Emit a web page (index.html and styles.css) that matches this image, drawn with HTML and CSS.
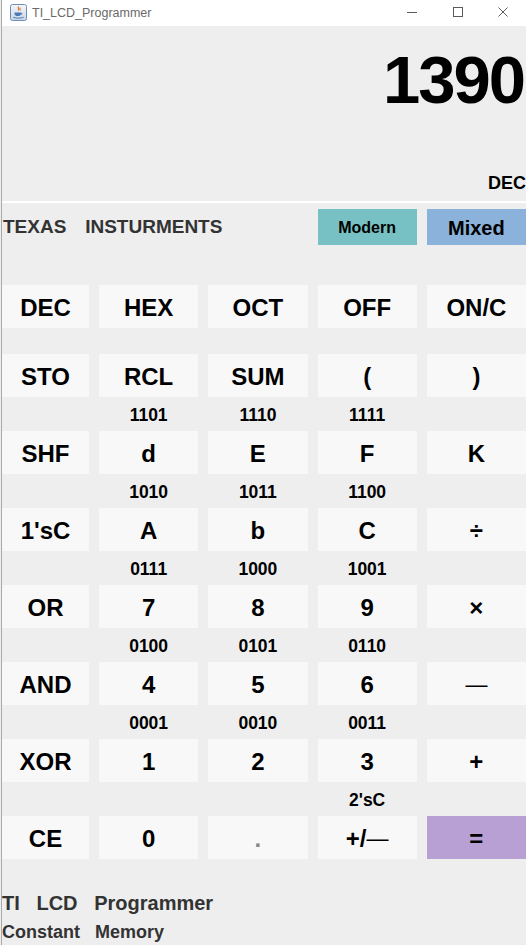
FILE: index.html
```
<!DOCTYPE html>
<html lang="en">
<head>
<meta charset="utf-8">
<title>TI_LCD_Programmer</title>
<link rel="stylesheet" href="styles.css">
</head>
<body>
<div class="window">
  <div class="titlebar">
    <svg class="app-icon" width="17" height="17" viewBox="0 0 17 17">
      <defs>
        <linearGradient id="ig" x1="0" y1="0" x2="0" y2="1">
          <stop offset="0" stop-color="#f4f7fb"/>
          <stop offset="1" stop-color="#c9d6e6"/>
        </linearGradient>
      </defs>
      <rect x="0.5" y="0.5" width="16" height="16" rx="2" fill="url(#ig)" stroke="#6f8db5"/>
      <path d="M8.6 2.5c-1.6 1.4 1.2 2.2-0.4 4.2M10.2 3.6c-1 0.9 0.6 1.5-0.3 2.8" fill="none" stroke="#e2731d" stroke-width="1.1"/>
      <path d="M4.5 8.5h6.5v1.2c0 1.4-1.3 2.3-3.2 2.3s-3.3-0.9-3.3-2.3z" fill="#4f79b4"/>
      <path d="M11 9c1.4 0 1.4 1.6 0 1.6" fill="none" stroke="#4f79b4" stroke-width="0.9"/>
      <path d="M3.2 13.3c2.6 1.1 7.8 1.1 10.4 0" fill="none" stroke="#4f79b4" stroke-width="1"/>
    </svg>
    <span class="title">TI_LCD_Programmer</span>
    <div class="controls">
      <svg class="ctl" width="12" height="12" viewBox="0 0 12 12"><path d="M1 6.5h10" stroke="#5b5b5b" stroke-width="1"/></svg>
      <svg class="ctl" width="12" height="12" viewBox="0 0 12 12"><rect x="1.5" y="1.5" width="9" height="9" fill="none" stroke="#5b5b5b" stroke-width="1"/></svg>
      <svg class="ctl" width="12" height="12" viewBox="0 0 12 12"><path d="M1.5 1.5l9 9M10.5 1.5l-9 9" stroke="#5b5b5b" stroke-width="1"/></svg>
    </div>
  </div>

  <div class="content">
    <div class="display">
      <div class="readout">1390</div>
      <div class="mode">DEC</div>
    </div>
    <div class="separator"></div>

    <div class="grid5 brand-row">
      <div class="brand">TEXAS   INSTURMENTS</div>
      <div class="key chip-modern">Modern</div>
      <div class="key chip-mixed">Mixed</div>
    </div>

    <div class="keypad">
      <div class="grid5 keys">
        <div class="key">DEC</div><div class="key">HEX</div><div class="key">OCT</div><div class="key">OFF</div><div class="key">ON/C</div>
      </div>
      <div class="spacer"></div>
      <div class="grid5 keys">
        <div class="key">STO</div><div class="key">RCL</div><div class="key">SUM</div><div class="key">(</div><div class="key">)</div>
      </div>
      <div class="grid5 labels">
        <div class="lbl"></div><div class="lbl">1101</div><div class="lbl">1110</div><div class="lbl">1111</div><div class="lbl"></div>
      </div>
      <div class="grid5 keys">
        <div class="key">SHF</div><div class="key">d</div><div class="key">E</div><div class="key">F</div><div class="key">K</div>
      </div>
      <div class="grid5 labels">
        <div class="lbl"></div><div class="lbl">1010</div><div class="lbl">1011</div><div class="lbl">1100</div><div class="lbl"></div>
      </div>
      <div class="grid5 keys">
        <div class="key">1'sC</div><div class="key">A</div><div class="key">b</div><div class="key">C</div><div class="key">÷</div>
      </div>
      <div class="grid5 labels">
        <div class="lbl"></div><div class="lbl">0111</div><div class="lbl">1000</div><div class="lbl">1001</div><div class="lbl"></div>
      </div>
      <div class="grid5 keys">
        <div class="key">OR</div><div class="key">7</div><div class="key">8</div><div class="key">9</div><div class="key">×</div>
      </div>
      <div class="grid5 labels">
        <div class="lbl"></div><div class="lbl">0100</div><div class="lbl">0101</div><div class="lbl">0110</div><div class="lbl"></div>
      </div>
      <div class="grid5 keys">
        <div class="key">AND</div><div class="key">4</div><div class="key">5</div><div class="key">6</div><div class="key"><span class="dash">—</span></div>
      </div>
      <div class="grid5 labels">
        <div class="lbl"></div><div class="lbl">0001</div><div class="lbl">0010</div><div class="lbl">0011</div><div class="lbl"></div>
      </div>
      <div class="grid5 keys">
        <div class="key">XOR</div><div class="key">1</div><div class="key">2</div><div class="key">3</div><div class="key">+</div>
      </div>
      <div class="grid5 labels">
        <div class="lbl"></div><div class="lbl"></div><div class="lbl"></div><div class="lbl">2'sC</div><div class="lbl"></div>
      </div>
      <div class="grid5 keys">
        <div class="key">CE</div><div class="key">0</div><div class="key key-dot">.</div><div class="key">+/<span class="dash">—</span></div><div class="key key-equals">=</div>
      </div>
    </div>

    <div class="footer">
      <div class="foot-title">TI   LCD   Programmer</div>
      <div class="foot-sub">Constant   Memory</div>
    </div>
  </div>
</div>
</body>
</html>
```
FILE: styles.css
```
html, body {
  margin: 0;
  padding: 0;
}

body {
  width: 526px;
  height: 945px;
  overflow: hidden;
  background: #eeeeee;
  font-family: "Liberation Sans", Arial, sans-serif;
}

.window {
  margin-left: 1px;
  border-left: 1px solid #a9a9a9;
  height: 945px;
  background: #eeeeee;
}

.titlebar {
  height: 26px;
  background: #ffffff;
  display: flex;
  align-items: center;
}

.app-icon {
  margin-left: 8px;
  margin-top: -2px;
  flex: none;
}

.title {
  margin-left: 5px;
  font-size: 12.5px;
  color: #6a6a6a;
  margin-top: -1px;
}

.controls {
  margin-left: auto;
  display: flex;
  align-items: center;
  gap: 33.5px;
  padding-right: 17px;
  margin-top: -3px;
}

.ctl {
  display: block;
}

.content {
  background: #eeeeee;
}

.display {
  height: 175px;
  box-sizing: border-box;
  padding-top: 20px;
  padding-right: 2px;
  text-align: right;
  color: #000;
  font-weight: bold;
}

.readout {
  font-size: 67px;
  line-height: 67px;
  letter-spacing: -2px;
}

.mode {
  margin-top: 61px;
  margin-right: -2px;
  font-size: 18px;
  line-height: 18px;
}

.separator {
  height: 2px;
  background: #ffffff;
}

.grid5 {
  display: grid;
  grid-template-columns: 87px repeat(4, 1fr);
  column-gap: 10px;
}

.brand-row {
  margin-top: 6px;
  height: 36px;
}

.brand {
  grid-column: 1 / 4;
  white-space: pre;
  word-spacing: 1px;
  font-size: 19px;
  font-weight: bold;
  color: #333333;
  display: flex;
  align-items: center;
  padding-left: 1px;
}

.key {
  background: #f8f8f8;
  display: flex;
  align-items: center;
  justify-content: center;
  box-sizing: border-box;
  padding-top: 2px;
  font-size: 24px;
  font-weight: bold;
  color: #000;
  white-space: nowrap;
}

.chip-modern {
  background: #77c0c4;
  font-size: 16px;
}

.chip-mixed {
  background: #8ab2da;
  font-size: 20px;
}

.keypad {
  margin-top: 40px;
}

.keys {
  height: 43px;
}

.spacer {
  height: 26px;
}

.labels {
  height: 34px;
}

.lbl {
  display: flex;
  align-items: center;
  justify-content: center;
  padding-top: 2px;
  font-size: 17.5px;
  font-weight: bold;
  color: #000;
}

.dash {
  font-weight: normal;
  font-size: 22px;
}

.key-dot {
  color: #8a8a8a;
}

.key-equals {
  background: #b8a0d5;
}

.footer {
  margin-top: 30px;
  font-weight: bold;
  color: #333333;
}

.foot-title {
  white-space: pre;
  font-size: 20px;
  line-height: 28px;
}

.foot-sub {
  white-space: pre;
  font-size: 18px;
  line-height: 30px;
}
```
